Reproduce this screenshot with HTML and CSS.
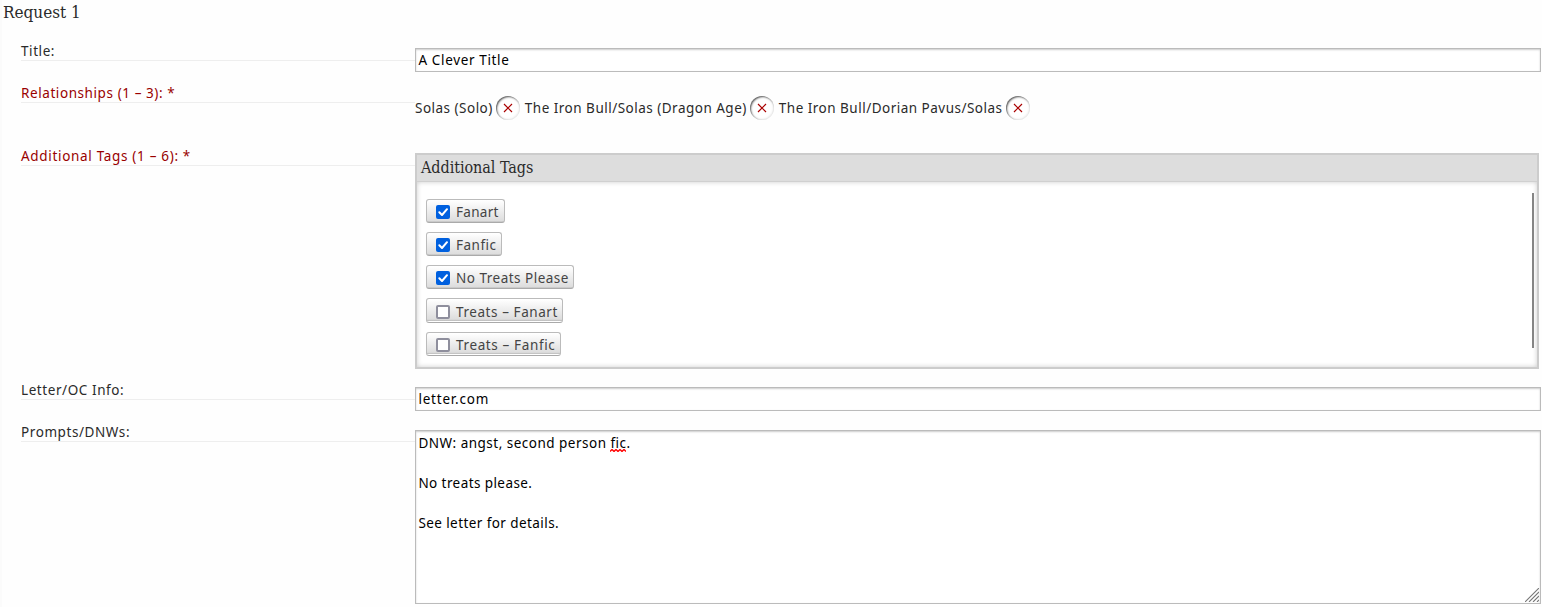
FILE: index.html
```html
<!DOCTYPE html>
<html lang="en">
<head>
<meta charset="utf-8">
<title>Request 1</title>
<link rel="stylesheet" href="styles.css">
</head>
<body>
<main class="request">
  <h2 class="heading"><span>Request 1</span></h2>
  <div class="row row-title">
    <div class="label"><span>Title:</span></div>
    <div class="field"><div class="input"><span>A Clever Title</span></div></div>
  </div>
  <div class="row row-relationships">
    <div class="label required"><span>Relationships (1 – 3): *</span></div>
    <ul class="relationships">
      <li><span class="solo">Solas (Solo)</span><button class="remove" aria-label="Remove"><svg viewBox="0 0 10 10"><path d="M1 1L9 9M9 1L1 9"/></svg></button></li>
      <li><span class="bull">The Iron Bull/Solas (Dragon Age)</span><button class="remove" aria-label="Remove"><svg viewBox="0 0 10 10"><path d="M1 1L9 9M9 1L1 9"/></svg></button></li>
      <li><span class="dorian">The Iron Bull/Dorian Pavus/Solas</span><button class="remove" aria-label="Remove"><svg viewBox="0 0 10 10"><path d="M1 1L9 9M9 1L1 9"/></svg></button></li>
    </ul>
  </div>
  <div class="row row-tags">
    <div class="label required"><span>Additional Tags (1 – 6): *</span></div>
    <section class="tags">
      <h3 class="tags-heading"><span>Additional Tags</span></h3>
      <div class="tags-body">
        <div class="options">
          <div class="option fanart"><i class="box checked"><svg viewBox="0 0 14 14"><path d="M3.3 7.3L6 10L11 4.2"/></svg></i><span>Fanart</span></div>
          <div class="option fanfic"><i class="box checked"><svg viewBox="0 0 14 14"><path d="M3.3 7.3L6 10L11 4.2"/></svg></i><span>Fanfic</span></div>
          <div class="option no-treats"><i class="box checked"><svg viewBox="0 0 14 14"><path d="M3.3 7.3L6 10L11 4.2"/></svg></i><span>No Treats Please</span></div>
          <div class="option off treats-art"><i class="box"></i><span>Treats – Fanart</span></div>
          <div class="option off treats-fic"><i class="box"></i><span>Treats – Fanfic</span></div>
        </div>
        <div class="scrollbar"></div>
      </div>
    </section>
  </div>
  <div class="row row-letter">
    <div class="label"><span>Letter/OC Info:</span></div>
    <div class="field"><div class="input"><span>letter.com</span></div></div>
  </div>
  <div class="row row-prompts">
    <div class="label"><span>Prompts/DNWs:</span></div>
    <div class="field">
      <div class="textarea">
        <p class="dnw">DNW: angst, second person <span class="misspelled">fic<svg viewBox="0 0 16 3"><path d="M0 2.5L2 .5L4 2.5L6 .5L8 2.5L10 .5L12 2.5L14 .5L16 2.5"/></svg></span>.</p>
        <p class="no">No treats please.</p>
        <p class="see">See letter for details.</p>
        <svg class="grip" viewBox="0 0 14 14"><path d="M0 14L14 0M4 14L14 4M8 14L14 8M12 14L14 12"/></svg>
      </div>
    </div>
  </div>
</main>
</body>
</html>
```
FILE: styles.css
```css
* { box-sizing: border-box; }
body {
  margin: 0;
  background: #fefefe;
  color: #2a2a2a;
  font: 13.5px/20px "Noto Sans", "Open Sans", sans-serif;
  letter-spacing: .49px;
  overflow: hidden;
}
h2, h3, p, ul { margin: 0; padding: 0; font-weight: 400; }
.request { height: 607px; border-left: 2px solid #fbfbfb; }
.heading {
  height: 42px;
  padding-left: 1px;
  font: 17px/25px "DejaVu Serif Condensed", "DejaVu Serif", serif;
  letter-spacing: 0;
}
.row { display: grid; grid-template-columns: 394px 1fr; padding-left: 19px; align-items: start; }
.row-title, .row-letter { height: 42px; }
.row-relationships { height: 63px; }
.row-tags { height: 234px; }
.row-prompts { height: 184px; }
.label { height: 19px; line-height: 18px; border-bottom: 1px solid #eee; white-space: nowrap; letter-spacing: .58px; }
.row-tags .label { letter-spacing: .68px; }
.required { color: #900; }
.field { padding-right: 1px; color: #000; }
.input {
  height: 24px;
  margin-top: 6px;
  padding-left: 2.4px;
  border: 1px solid #bbb;
  background: #fff;
  box-shadow: inset 0 1px 2px #ccc;
  line-height: 22px;
  letter-spacing: .65px;
}
.row-letter .input { letter-spacing: .8px; }
.relationships { display: flex; list-style: none; padding-top: 12px; white-space: nowrap; }
.relationships li { display: flex; align-items: center; height: 24px; }
.remove {
  display: grid;
  place-items: center;
  width: 24px;
  height: 24px;
  margin: 0 5px 0 3px;
  padding: 0;
  border: 0;
  border-radius: 50%;
  background: #fff;
  box-shadow: inset 1px 1px 2px #555, inset -1px -1px 2px #eee;
}
.remove svg { width: 10px; height: 10px; fill: none; stroke: #a00; stroke-width: 1.2; }
.tags {
  width: 1124px;
  height: 216px;
  margin-top: 6px;
  border: 2px solid #ccc;
  background: #fff;
}
.tags-heading {
  height: 27px;
  padding-left: 4px;
  border-bottom: 1px solid #d0d0d0;
  background: #ddd;
  font: 16px/25px "DejaVu Serif Condensed", "DejaVu Serif", serif;
  letter-spacing: -.05px;
}
.tags-body {
  display: flex;
  justify-content: space-between;
  height: 185px;
  padding: 11px 3px 0 9px;
  box-shadow: inset 0 0 5px #ccc;
}
.options { display: grid; grid-auto-rows: 24px; row-gap: 9.15px; padding-top: 6px; justify-items: start; }
.option {
  display: flex;
  align-items: center;
  gap: 6px;
  height: 24px;
  padding-left: 9px;
  border: 1px solid #bbb;
  border-bottom-color: #aaa;
  border-radius: 3px;
  background: linear-gradient(#fff 2%, #ddd 95%, #bbb 100%);
  color: #444;
  white-space: nowrap;
}
.option.off { background: linear-gradient(#fff 2%, #ddd 88%, #bbb 95%, #fff 96%); }
.fanart { width: 79px; letter-spacing: .3px; }
.fanfic { width: 76px; }
.no-treats { width: 148px; }
.treats-art { width: 137px; height: 25px; letter-spacing: .57px; }
.treats-fic { width: 135px; letter-spacing: .63px; }
.box { width: 14px; height: 14px; margin-top: 2px; border: 2px solid #8f8f9d; border-radius: 2px; background: #fff; }
.box.checked { border: 0; background: #0060df; }
.box svg { display: block; fill: none; stroke: #fff; stroke-width: 2; stroke-linecap: round; stroke-linejoin: round; }
.option span { margin-top: 2px; }
.scrollbar { width: 2px; height: 155px; background: #858585; }
.textarea {
  position: relative;
  height: 174px;
  margin-top: 7px;
  padding: 2px 0 0 2.4px;
  border: 1px solid #bbb;
  background: #fff;
  box-shadow: inset 0 1px 2px #ccc;
}
.textarea p { height: 40px; white-space: nowrap; }
.no, .see { letter-spacing: .42px; }
.misspelled { position: relative; }
.misspelled svg { position: absolute; left: 0; top: 15px; width: 16px; height: 3px; fill: none; stroke: #f00; stroke-width: 1.4; }
.grip { position: absolute; right: 1px; bottom: 1px; width: 14px; height: 14px; fill: none; stroke: #777; stroke-width: 1.1; }
```
